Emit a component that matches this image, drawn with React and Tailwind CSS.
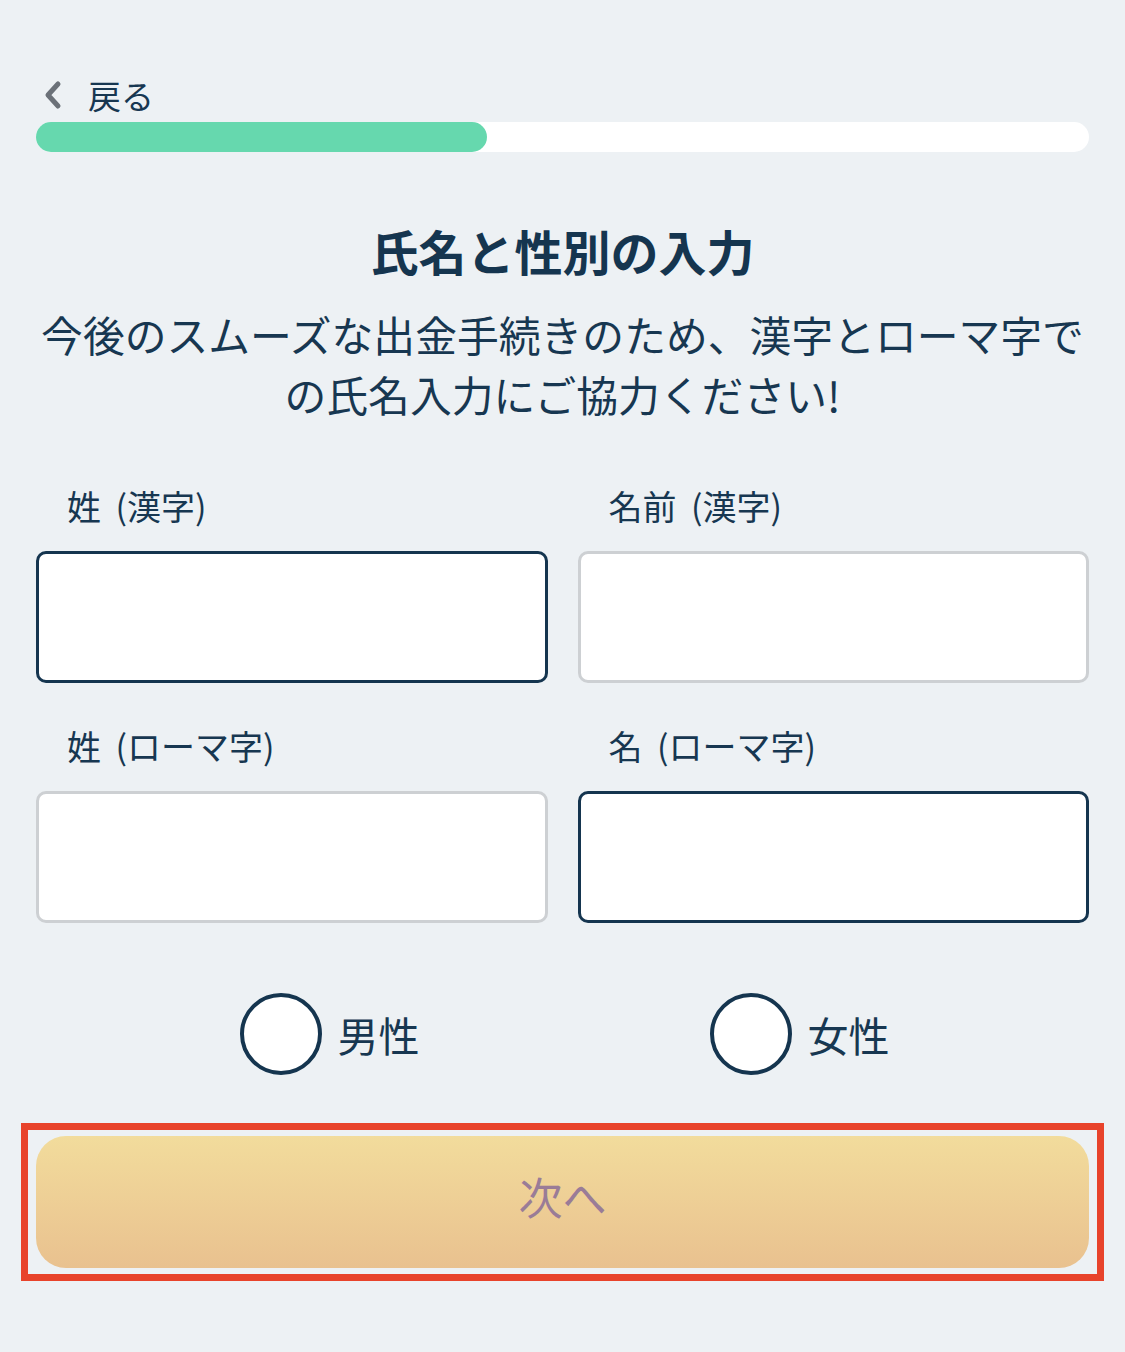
import React from 'react';

const font = { fontFamily: '"Noto Sans CJK JP", "Noto Sans", sans-serif' };

const Field = ({ label, active }) => (
  <div className="flex flex-col">
    <label className="pl-[31px] text-[34px] leading-[40px] text-[#173751] [word-spacing:7px]">{label}</label>
    <div
      className={
        'mt-[25px] h-[132px] rounded-[10px] bg-white ' +
        (active ? 'border-[3px] border-[#15354f]' : 'border-[3px] border-[#cdd0d3]')
      }
    />
  </div>
);

const Radio = ({ label }) => (
  <div className="flex items-center">
    <div className="h-[82px] w-[82px] rounded-full border-[4px] border-[#15354f] bg-white" />
    <span className="ml-[16px] text-[41px] leading-none text-[#173751]">{label}</span>
  </div>
);

export default function App() {
  return (
    <div className="min-h-[1352px] w-[1125px] bg-[#edf1f4]" style={font}>
      <div className="px-[36px] pt-[76px]">
        {/* back link */}
        <div className="flex items-center h-[38px]">
          <svg width="22" height="30" viewBox="0 0 22 30" className="ml-[6px]">
            <path d="M16 4 L6 15 L16 26" fill="none" stroke="#6b7178" strokeWidth="5" strokeLinecap="round" strokeLinejoin="round" />
          </svg>
          <span className="ml-[24px] text-[33px] leading-none text-[#173751]">戻る</span>
        </div>

        {/* progress */}
        <div className="mt-[8px] h-[30px] w-full rounded-full bg-white">
          <div className="h-full w-[451px] rounded-full bg-[#66d8ae]" />
        </div>

        {/* heading */}
        <h1 className="mt-[68px] text-center text-[48px] font-bold leading-[60px] text-[#15354f]">
          氏名と性別の入力
        </h1>
        <p className="-mx-[22px] mt-[24px] whitespace-nowrap text-center text-[41.8px] leading-[60px] text-[#173751]">
          今後のスムーズな出金手続きのため、漢字とローマ字で
          <br />
          の氏名入力にご協力ください!
        </p>

        {/* name fields */}
        <div className="mt-[62px] grid grid-cols-2 gap-x-[30px] gap-y-[43px]">
          <Field label="姓 (漢字)" active />
          <Field label="名前 (漢字)" />
          <Field label="姓 (ローマ字)" />
          <Field label="名 (ローマ字)" active />
        </div>
      </div>

      {/* gender */}
      <div className="mt-[70px] flex justify-center gap-[290px] pl-[4px]">
        <Radio label="男性" />
        <Radio label="女性" />
      </div>

      {/* next button with highlight */}
      <div className="mx-[21px] mt-[48px] border-[7px] border-[#e8432b] px-[8px] py-[6px]">
        <button className="flex h-[132px] w-full items-center justify-center rounded-[30px] bg-gradient-to-b from-[#f2dc9c] to-[#e9c18f] pb-[12px] text-[44px] text-[#9a7c97]">
          次へ
        </button>
      </div>
    </div>
  );
}
